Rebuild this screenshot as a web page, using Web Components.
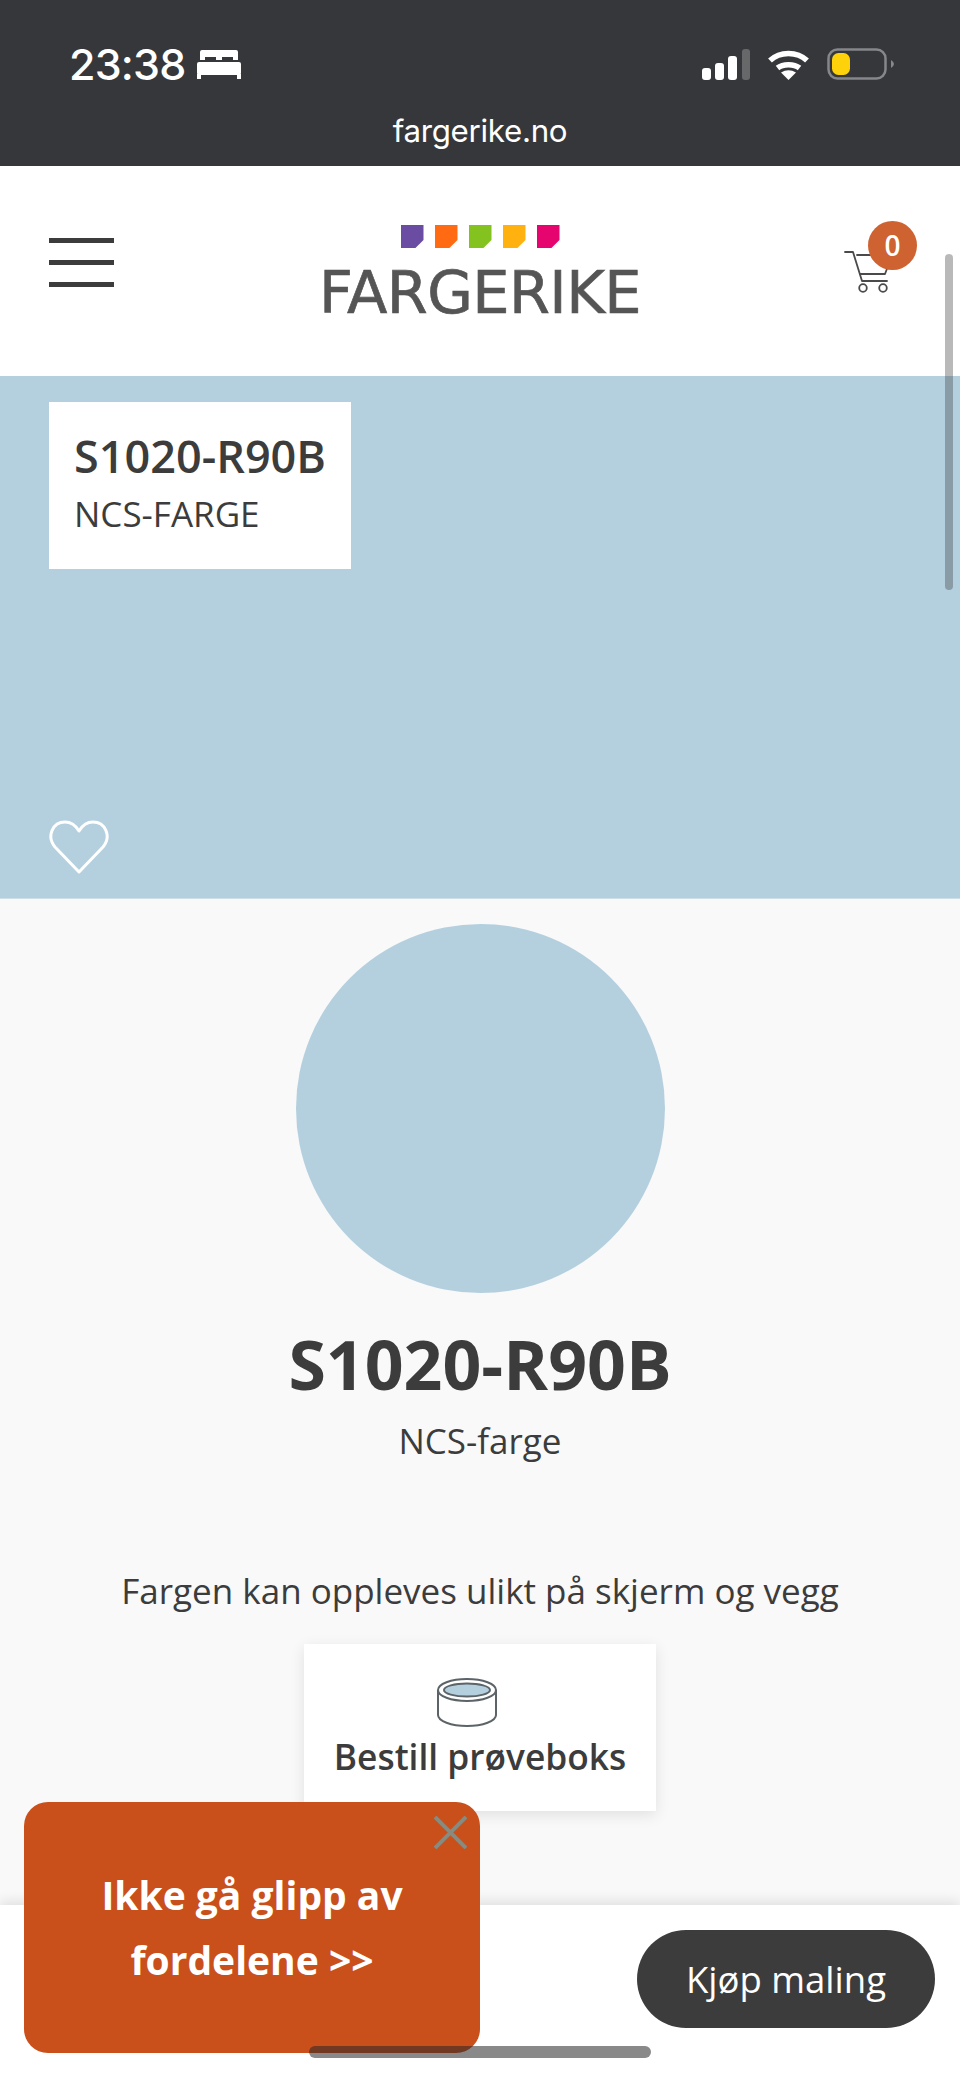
<!DOCTYPE html>
<html lang="no">
<head>
<meta charset="utf-8">
<title>S1020-R90B</title>
<style>
    html, body { margin: 0; padding: 0; }
    body {
        position: relative;
        width: 960px;
        height: 2078px;
        overflow: hidden;
        background: #f9f9f9;
        font-family: "Open Sans", "Noto Sans", sans-serif;
        color: #3c3c3c;
    }
    .scroll-thumb {
        position: absolute;
        left: 945px;
        top: 254px;
        width: 8px;
        height: 336px;
        border-radius: 4px;
        background: rgba(60, 60, 60, 0.36);
    }
    .home-bar {
        position: absolute;
        left: 309px;
        top: 2046px;
        width: 342px;
        height: 12px;
        border-radius: 6px;
        background: rgba(40, 40, 40, 0.55);
        z-index: 20;
    }
</style>
</head>
<body>
<status-bar time="23:38" url="fargerike.no"></status-bar>
<site-header count="0"></site-header>
<color-hero code="S1020-R90B" kind="NCS-FARGE"></color-hero>
<color-summary code="S1020-R90B" kind="NCS-farge" note="Fargen kan oppleves ulikt på skjerm og vegg">
    <sample-button>Bestill prøveboks</sample-button>
</color-summary>
<buy-bar>Kjøp maling</buy-bar>
<promo-popup>Ikke gå glipp av<br>fordelene &gt;&gt;</promo-popup>
<div class="scroll-thumb"></div>
<div class="home-bar"></div>

<script>
class StatusBar extends HTMLElement {
    connectedCallback() {
        this.attachShadow({ mode: 'open' });
        this.shadowRoot.innerHTML = `
            <style>
                :host {
                    display: block;
                    height: 166px;
                    box-sizing: border-box;
                    padding-top: 45px;
                    background: #35373a;
                    color: #fff;
                }
                .row {
                    display: flex;
                    justify-content: space-between;
                    align-items: center;
                    height: 38px;
                    padding: 0 65px 0 69px;
                }
                .left, .right { display: flex; align-items: center; }
                .left { gap: 11px; }
                .right { gap: 18px; }
                .time {
                    font: 500 43px/38px Inter, "Liberation Sans", sans-serif;
                    letter-spacing: -0.8px;
                }
                .url {
                    margin-top: 28px;
                    text-align: center;
                    font: 400 31.300px/40px Inter, "Liberation Sans", sans-serif;
                    letter-spacing: -0.3px;
                }
                svg { display: block; }
            </style>
            <div class="row">
                <div class="left">
                    <span class="time">${this.getAttribute('time')}</span>
                    <svg width="44" height="29" viewBox="0 0 44 29" fill="#fff">
                        <path d="M5 0H39Q41 0 41 2V10H36V7H25V10H19V7H8V10H3V2Q3 0 5 0Z"/>
                        <rect x="0" y="12" width="44" height="13" rx="2"/>
                        <rect x="0" y="24" width="4" height="5"/>
                        <rect x="40" y="24" width="4" height="5"/>
                    </svg>
                </div>
                <div class="right">
                    <svg width="48" height="31" viewBox="0 0 48 31">
                        <rect x="0" y="19" width="9" height="12" rx="3" fill="#fff"/>
                        <rect x="13" y="14" width="9" height="17" rx="3" fill="#fff"/>
                        <rect x="26" y="7" width="9" height="24" rx="3" fill="#fff"/>
                        <rect x="40" y="0" width="8" height="31" rx="3" fill="#66686a"/>
                    </svg>
                    <svg width="41" height="31" viewBox="0 0 41 31" fill="none" stroke="#fff" stroke-width="5.500">
                        <path d="M2 11.500C12 2 29 2 39 11.500"/>
                        <path d="M9.500 19C15 14.500 26 14.500 31.500 19"/>
                        <path d="M20.500 31L13 23.500Q20.500 19 28 23.500Z" fill="#fff" stroke="none"/>
                    </svg>
                    <svg width="68" height="32" viewBox="0 0 68 32">
                        <rect x="1.500" y="1.500" width="57" height="29" rx="9" fill="none" stroke="#85878a" stroke-width="2.500"/>
                        <rect x="5" y="5" width="18" height="22" rx="6.500" fill="#fdd20a"/>
                        <path d="M64 12Q67 14 67 16Q67 18 64 20Z" fill="#85878a"/>
                    </svg>
                </div>
            </div>
            <div class="url">${this.getAttribute('url')}</div>
        `;
    }
}

class SiteLogo extends HTMLElement {
    connectedCallback() {
        this.attachShadow({ mode: 'open' });
        const colors = ['#6a4da3', '#ff6a13', '#84c31f', '#ffb20f', '#e6056f'];
        this.shadowRoot.innerHTML = `
            <style>
                :host {
                    display: flex;
                    flex-direction: column;
                    align-items: center;
                    gap: 15px;
                }
                .flags { display: flex; gap: 11px; }
                .flags i {
                    display: block;
                    width: 23px;
                    height: 23px;
                    clip-path: polygon(0 0, 100% 0, 100% 65%, 65% 100%, 0 100%);
                }
                .name {
                    font: 400 59px/60px "DejaVu Sans", sans-serif;
                    letter-spacing: -0.6px;
                    color: #555;
                    -webkit-text-stroke: 0.7px #555;
                }
            </style>
            <div class="flags">${colors.map(c => `<i style="background:${c}"></i>`).join('')}</div>
            <div class="name">FARGERIKE</div>
        `;
    }
}

class SiteHeader extends HTMLElement {
    connectedCallback() {
        this.attachShadow({ mode: 'open' });
        this.shadowRoot.innerHTML = `
            <style>
                :host {
                    display: block;
                    height: 210px;
                    background: #fff;
                }
                .bar {
                    display: grid;
                    grid-template-columns: 1fr auto 1fr;
                    height: 100%;
                    box-sizing: border-box;
                    padding: 59px 49px 0 49px;
                }
                .menu {
                    display: flex;
                    flex-direction: column;
                    gap: 17px;
                    width: 65px;
                    margin-top: 13px;
                }
                .menu span { display: block; height: 5px; background: #3c3c3c; }
                .cart {
                    position: relative;
                    justify-self: end;
                    width: 73px;
                    height: 71px;
                    margin: -4px -6px 0 0;
                }
                .cart svg { position: absolute; left: 0; top: 29px; display: block; }
                .badge {
                    position: absolute;
                    right: 0;
                    top: 0;
                    width: 49px;
                    height: 49px;
                    border-radius: 50%;
                    background: #cf6231;
                    color: #fff;
                    font: 600 28px/49px "Open Sans", sans-serif;
                    text-align: center;
                }
            </style>
            <div class="bar">
                <div class="menu"><span></span><span></span><span></span></div>
                <site-logo></site-logo>
                <div class="cart">
                    <svg width="46" height="44" viewBox="0 0 46 44" fill="none" stroke="#4a4a4a" stroke-width="1.800" stroke-linecap="round" stroke-linejoin="round">
                        <path d="M1 2H9L18 31H43"/>
                        <path d="M13 5H28"/>
                        <path d="M16 24H41L44 16"/>
                        <circle cx="19" cy="38" r="3.800"/>
                        <circle cx="39" cy="38" r="3.800"/>
                    </svg>
                    <div class="badge">${this.getAttribute('count')}</div>
                </div>
            </div>
        `;
    }
}

class ColorHero extends HTMLElement {
    connectedCallback() {
        this.attachShadow({ mode: 'open' });
        this.shadowRoot.innerHTML = `
            <style>
                :host {
                    display: flex;
                    flex-direction: column;
                    justify-content: space-between;
                    align-items: flex-start;
                    height: 523px;
                    box-sizing: border-box;
                    padding: 26px 0 23px 49px;
                    background: #b4d0df;
                    border-bottom: 1px solid #cfdfe8;
                }
                .label {
                    width: 302px;
                    height: 167px;
                    box-sizing: border-box;
                    padding: 26px 0 0 25px;
                    background: #fff;
                    color: #3c3c3c;
                }
                .code { font: 600 45px/56px "Open Sans", sans-serif; }
                .kind { font: 400 35px/50px "Open Sans", sans-serif; margin-top: 5px; }
                svg { display: block; }
            </style>
            <div class="label">
                <div class="code">${this.getAttribute('code')}</div>
                <div class="kind">${this.getAttribute('kind')}</div>
            </div>
            <svg width="60" height="55" viewBox="0 0 60 55" fill="none" stroke="#fff" stroke-width="3" stroke-linejoin="round">
                <path d="M30 52L6 27C-3 16 4 2 16 2C23 2 27 6 30 11C33 6 37 2 44 2C56 2 63 16 54 27Z"/>
            </svg>
        `;
    }
}

class ColorSummary extends HTMLElement {
    connectedCallback() {
        this.attachShadow({ mode: 'open' });
        this.shadowRoot.innerHTML = `
            <style>
                :host {
                    display: flex;
                    flex-direction: column;
                    align-items: center;
                    padding-top: 25px;
                    text-align: center;
                }
                .swatch {
                    width: 369px;
                    height: 369px;
                    border-radius: 50%;
                    background: #b4d0df;
                }
                h1 {
                    margin: 31px 0 0;
                    font: 700 68px/80px "Open Sans", sans-serif;
                    color: #3c3c3c;
                }
                .kind { margin-top: 12px; font: 400 35px/50px "Open Sans", sans-serif; }
                .note { margin-top: 100px; font: 400 35px/50px "Open Sans", sans-serif; }
                ::slotted(sample-button) { margin-top: 28px; }
            </style>
            <div class="swatch"></div>
            <h1>${this.getAttribute('code')}</h1>
            <div class="kind">${this.getAttribute('kind')}</div>
            <div class="note">${this.getAttribute('note')}</div>
            <slot></slot>
        `;
    }
}

class SampleButton extends HTMLElement {
    connectedCallback() {
        this.attachShadow({ mode: 'open' });
        this.shadowRoot.innerHTML = `
            <style>
                :host {
                    display: flex;
                    flex-direction: column;
                    align-items: center;
                    width: 352px;
                    height: 167px;
                    box-sizing: border-box;
                    padding-top: 34px;
                    background: #fff;
                    box-shadow: 0 4px 14px rgba(0, 0, 0, 0.1);
                }
                .text { font: 600 35.300px/50px "Open Sans", sans-serif; color: #3c3c3c; margin-top: 4px; }
                svg { display: block; margin-right: 27px; }
            </style>
            <svg width="60" height="49" viewBox="0 0 60 49" fill="none" stroke="#5c6468" stroke-width="2">
                <path d="M1 12V37C1 43 14 48 30 48C46 48 59 43 59 37V12"/>
                <ellipse cx="30" cy="12" rx="29" ry="11" fill="#fff"/>
                <ellipse cx="30" cy="12" rx="23" ry="6.500" fill="#b4d0df"/>
            </svg>
            <div class="text"><slot></slot></div>
        `;
    }
}

class BuyBar extends HTMLElement {
    connectedCallback() {
        this.attachShadow({ mode: 'open' });
        this.shadowRoot.innerHTML = `
            <style>
                :host {
                    position: absolute;
                    left: 0;
                    right: 0;
                    bottom: 0;
                    height: 173px;
                    box-sizing: border-box;
                    display: flex;
                    justify-content: flex-end;
                    align-items: flex-start;
                    padding: 25px 25px 0 0;
                    background: #fff;
                    box-shadow: 0 -4px 12px rgba(0, 0, 0, 0.1);
                    z-index: 5;
                }
                a {
                    display: block;
                    width: 298px;
                    height: 98px;
                    border-radius: 49px;
                    background: #3c3c3c;
                    color: #fff;
                    text-align: center;
                    font: 400 36.500px/98px "Open Sans", sans-serif;
                }
            </style>
            <a><slot></slot></a>
        `;
    }
}

class PromoPopup extends HTMLElement {
    connectedCallback() {
        this.attachShadow({ mode: 'open' });
        this.shadowRoot.innerHTML = `
            <style>
                :host {
                    position: absolute;
                    left: 24px;
                    top: 1802px;
                    width: 456px;
                    height: 251px;
                    box-sizing: border-box;
                    padding-top: 60px;
                    border-radius: 24px;
                    background: #c94f1b;
                    color: #fff;
                    text-align: center;
                    font: 700 39px/65px "Open Sans", sans-serif;
                    z-index: 10;
                }
                svg { position: absolute; left: 410px; top: 14px; display: block; }
            </style>
            <svg width="33" height="33" viewBox="0 0 33 33" stroke="#8a8a7e" stroke-width="4" fill="none">
                <path d="M1 1L32 32M32 1L1 32"/>
            </svg>
            <slot></slot>
        `;
    }
}

customElements.define('status-bar', StatusBar);
customElements.define('site-logo', SiteLogo);
customElements.define('site-header', SiteHeader);
customElements.define('color-hero', ColorHero);
customElements.define('color-summary', ColorSummary);
customElements.define('sample-button', SampleButton);
customElements.define('buy-bar', BuyBar);
customElements.define('promo-popup', PromoPopup);
</script>
</body>
</html>
